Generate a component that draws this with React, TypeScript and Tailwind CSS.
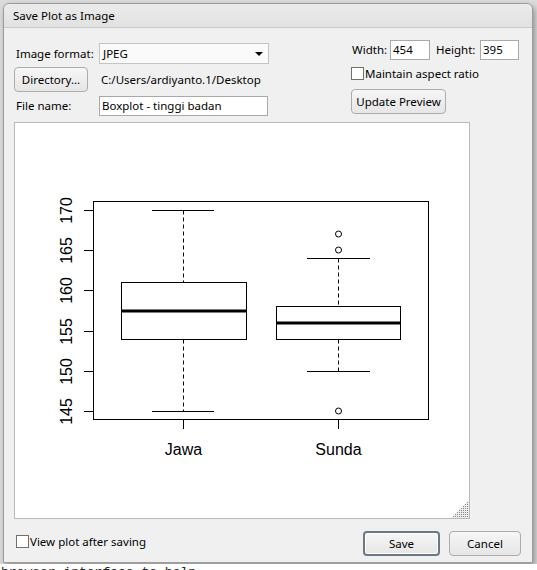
import React from 'react';

const ui = { fontFamily: '"Noto Sans", "Open Sans", sans-serif' };
const plotFont = '"Liberation Sans", Arial, sans-serif';

// y position of a value on the boxplot scale
const yOf = (v: number) => 87 + (170 - v) * 8.04;

type BoxStat = {
  name: string;
  cx: number;
  left: number;
  right: number;
  capL: number;
  capR: number;
  lo: number;
  q1: number;
  med: number;
  q3: number;
  hi: number;
  outliers: number[];
};

const groups: BoxStat[] = [
  { name: 'Jawa', cx: 168, left: 106, right: 231, capL: 137, capR: 199, lo: 145, q1: 154, med: 157.5, q3: 161, hi: 170, outliers: [] },
  { name: 'Sunda', cx: 323, left: 261, right: 385, capL: 292, capR: 355, lo: 150, q1: 154, med: 156, q3: 158, hi: 164, outliers: [167, 165, 145] },
];

const Boxplot = () => (
  <svg width="454" height="395" viewBox="0 0 454 395" className="block">
    <rect x="78.5" y="78.5" width="335" height="218" fill="none" stroke="#000" strokeWidth="1" />
    {[145, 150, 155, 160, 165, 170].map((v) => {
      const y = Math.round(yOf(v)) + 0.5;
      return (
        <g key={v}>
          <line x1="69" y1={y} x2="78" y2={y} stroke="#000" />
          <text
            x="57"
            y={y}
            transform={`rotate(-90 57 ${y})`}
            textAnchor="middle"
            fontFamily={plotFont}
            fontSize="16"
            fill="#000"
          >
            {v}
          </text>
        </g>
      );
    })}
    {groups.map((g) => {
      const cx = g.cx + 0.5;
      const q1 = Math.round(yOf(g.q1)) + 0.5;
      const q3 = Math.round(yOf(g.q3)) + 0.5;
      const hi = Math.round(yOf(g.hi)) + 0.5;
      const lo = Math.round(yOf(g.lo)) + 0.5;
      const med = Math.round(yOf(g.med));
      return (
        <g key={g.name}>
          <line x1={cx} y1={hi} x2={cx} y2={q3} stroke="#000" strokeDasharray="4 3" />
          <line x1={cx} y1={q1} x2={cx} y2={lo} stroke="#000" strokeDasharray="4 3" />
          <line x1={g.capL} y1={hi} x2={g.capR} y2={hi} stroke="#000" />
          <line x1={g.capL} y1={lo} x2={g.capR} y2={lo} stroke="#000" />
          <rect x={g.left + 0.5} y={q3} width={g.right - g.left} height={q1 - q3} fill="none" stroke="#000" />
          <line x1={g.left} y1={med} x2={g.right + 1} y2={med} stroke="#000" strokeWidth="3" />
          {g.outliers.map((o) => (
            <circle key={o} cx={cx} cy={Math.round(yOf(o))} r="3" fill="none" stroke="#000" />
          ))}
          <line x1={cx} y1="297" x2={cx} y2="306" stroke="#000" />
          <text x={cx} y="332" textAnchor="middle" fontFamily={plotFont} fontSize="16" fill="#000">
            {g.name}
          </text>
        </g>
      );
    })}
  </svg>
);

const ResizeGrip = () => {
  const dots: React.ReactNode[] = [];
  for (let r = 0; r < 8; r++) {
    for (let c = 0; c < 8; c++) {
      if (c + r >= 7) dots.push(<rect key={`${r}-${c}`} x={2 + c * 2} y={2 + r * 2} width="1" height="1" fill="#8a8a8a" />);
    }
  }
  return (
    <svg width="18" height="18" className="absolute right-0 bottom-0">
      <polygon points="18,0 18,18 0,18" fill="#ececec" />
      {dots}
    </svg>
  );
};

const CheckBox = () => <span className="w-[13px] h-[13px] border border-[#707070] bg-white shrink-0" />;

const Button = ({ children, className = '', primary = false }: { children: React.ReactNode; className?: string; primary?: boolean }) => (
  <button
    className={`h-[25px] rounded-[4px] text-[11.5px] text-black bg-gradient-to-b from-[#f6f6f6] to-[#e6e6e6] ${
      primary ? 'border-2 border-[#6b7987] shadow-[inset_0_0_0_1px_#ffffff]' : 'border border-[#acacac]'
    } ${className}`}
  >
    {children}
  </button>
);

const TextInput = ({ value, className = '' }: { value: string; className?: string }) => (
  <div className={`h-[20px] border border-[#a9a9a9] bg-white text-[11.5px] text-black leading-[18px] pl-[2px] ${className}`}>{value}</div>
);

export default function App() {
  return (
    <div className="w-[537px] h-[570px] overflow-hidden bg-[#dcdcdc]" style={ui}>
      <div className="ml-[3px] mt-[3px] w-[530px] h-[560px] border border-[#9c9c9c] rounded-t-[6px] bg-[#f0f0f0] flex flex-col shadow-[2px_3px_6px_rgba(0,0,0,0.35)]">
        {/* title bar */}
        <div className="h-[24px] shrink-0 rounded-t-[6px] bg-gradient-to-b from-[#ebebeb] to-[#e2e2e2] border-b border-[#c9c9c9] pl-[9px] text-[11.5px] leading-[24px] text-black">
          Save Plot as Image
        </div>

        <div className="flex pl-[10px]">
          {/* left controls */}
          <div className="w-[337px] flex flex-col pt-[15px]">
            <div className="flex items-center h-[21px]">
              <span className="w-[85px] pl-[2px] text-[11.5px] text-black">Image format:</span>
              <div className="w-[170px] h-[21px] border border-[#c4c4c4] bg-[#fafafa] flex items-center justify-between pl-[3px] pr-[5px] text-[11.5px] text-black">
                <span>JPEG</span>
                <span className="w-0 h-0 border-l-[4px] border-r-[4px] border-t-[4px] border-l-transparent border-r-transparent border-t-black" />
              </div>
            </div>
            <div className="flex items-center h-[25px] mt-[3px]">
              <Button className="w-[74px]">Directory...</Button>
              <span className="ml-[13px] text-[11.5px] text-black">C:/Users/ardiyanto.1/Desktop</span>
            </div>
            <div className="flex items-center h-[20px] mt-[4px]">
              <span className="w-[85px] pl-[2px] text-[11.5px] text-black">File name:</span>
              <TextInput value="Boxplot - tinggi badan" className="w-[169px]" />
            </div>
          </div>

          {/* size controls */}
          <div className="flex flex-col pt-[12px]">
            <div className="flex items-center h-[20px] text-[11.5px] text-black">
              <span className="ml-[1px] w-[38px]">Width:</span>
              <TextInput value="454" className="w-[40px]" />
              <span className="ml-[6px] w-[44px]">Height:</span>
              <TextInput value="395" className="w-[39px]" />
            </div>
            <div className="flex items-center h-[13px] mt-[7px] gap-[1px] text-[11.5px] text-black">
              <CheckBox />
              <span>Maintain aspect ratio</span>
            </div>
            <Button className="w-[95px] mt-[9px]">Update Preview</Button>
          </div>
        </div>

        {/* preview */}
        <div className="relative ml-[10px] mt-[6px] w-[456px] h-[397px] border border-[#b9b9b9] bg-white">
          <Boxplot />
          <ResizeGrip />
        </div>

        <div className="flex items-start pl-[12px] pr-[11px] mt-[12px]">
          <div className="flex items-center gap-[1px] mt-[2px] text-[11.5px] text-black">
            <CheckBox />
            <span>View plot after saving</span>
          </div>
          <div className="ml-auto flex gap-[9px]">
            <Button primary className="w-[77px]">Save</Button>
            <Button className="w-[72px]">Cancel</Button>
          </div>
        </div>
      </div>
      <div className="mt-[1px] bg-white h-[20px] pl-[1px] text-[13px] leading-[18px] text-[#222]" style={{ fontFamily: '"Liberation Mono", monospace' }}>
        browser interface to help.
      </div>
    </div>
  );
}
